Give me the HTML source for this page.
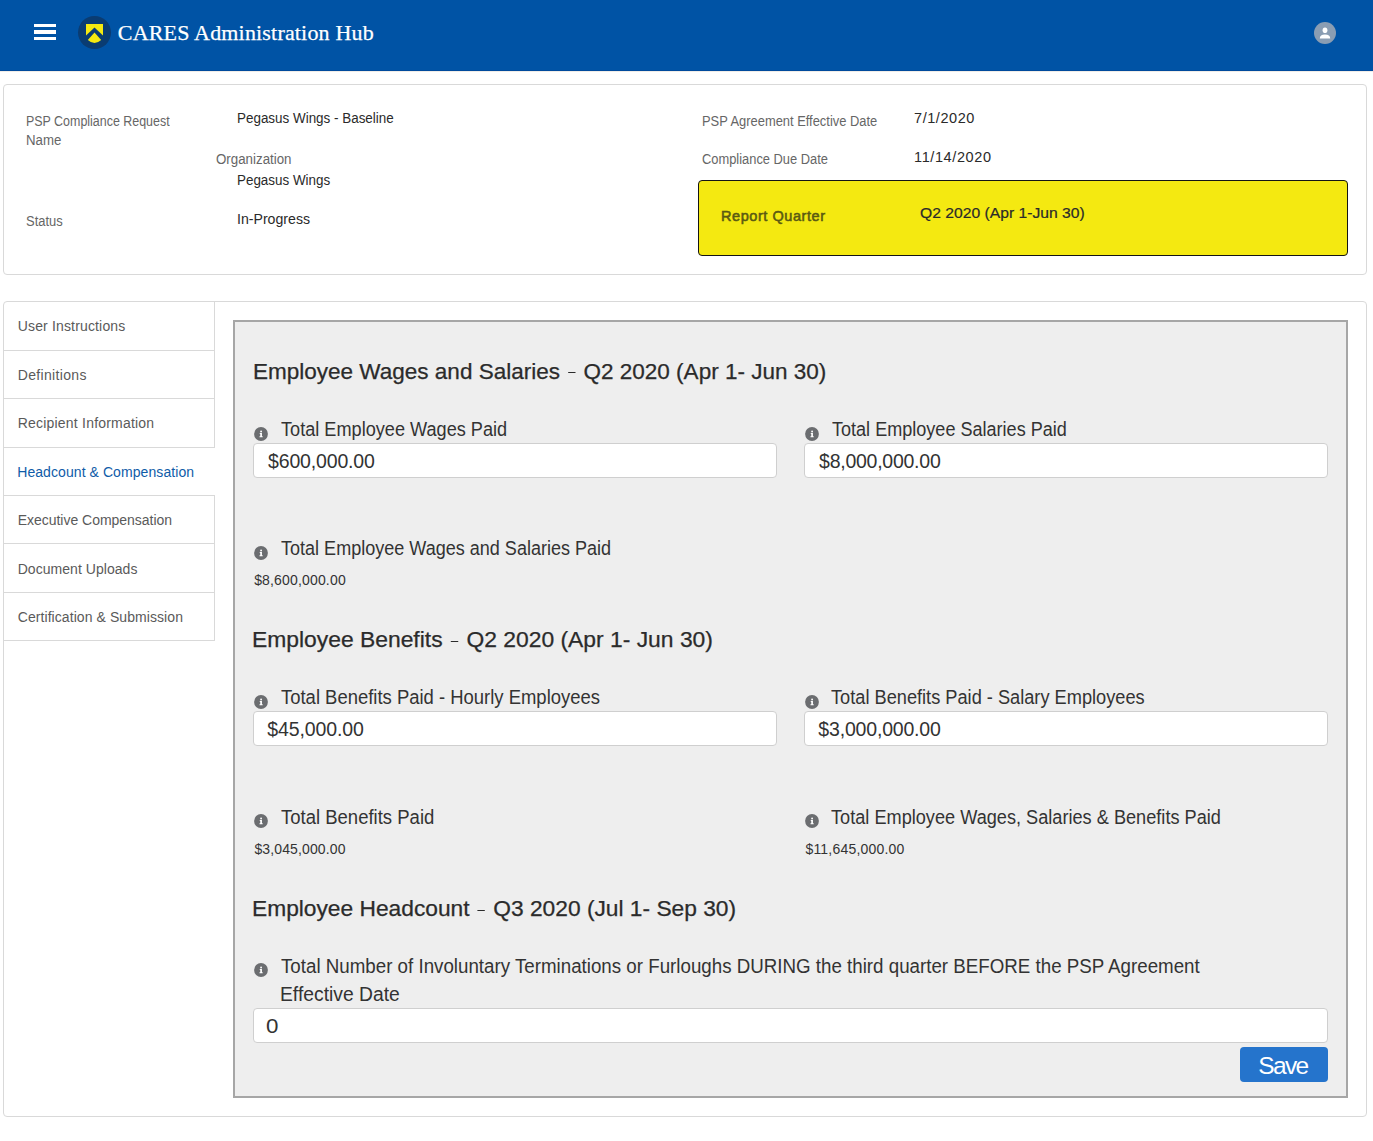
<!DOCTYPE html>
<html><head><meta charset="utf-8">
<style>
*{box-sizing:border-box;margin:0;padding:0}
html,body{width:1373px;height:1141px;overflow:hidden;background:#fff;font-family:"Liberation Sans",sans-serif;color:#333}
.a{position:absolute;white-space:nowrap;line-height:1}
#hdr{position:absolute;left:0;top:0;width:1373px;height:71px;background:#0053a5;border-bottom:1px solid #004a9c;box-shadow:0 1px 0 #f1ede8}
.bar{position:absolute;left:34px;width:22px;background:#fff}
.ttl{font-family:"Liberation Serif",serif;color:#fff;-webkit-text-stroke:0.25px #fff}
.card{position:absolute;border:1px solid #d9d9d9;border-radius:4px;background:#fff}
.lbl{color:#666}
.val{color:#2a2a2a}
#yel{position:absolute;left:698px;top:180px;width:650px;height:76px;background:#f4e911;border:1px solid #141414;border-radius:4px}
.tab{position:absolute;left:3px;width:212px;border-bottom:1px solid #d9d9d9;border-right:1px solid #d9d9d9}
.tt{color:#5a5a5a}
#panel{position:absolute;left:233px;top:320px;width:1115px;height:778px;background:#eeeeee;border:2px solid #a6a6a6}
.h2{color:#2b2b2b;-webkit-text-stroke:0.25px #2b2b2b}
.dash{display:inline-block;width:7.3px;height:1.3px;background:#2b2b2b;vertical-align:0.25em;margin:0 1.6px}
.fl{color:#333}
.ic{position:absolute;width:14px;height:14px}
.inp{position:absolute;height:35px;background:#fff;border:1px solid #cfcfcf;border-radius:4px}
.iv{color:#333}
.sm{color:#333}
#save{position:absolute;left:1240px;top:1047px;width:88px;height:35px;background:#2574cc;border-radius:4px}
.sv{color:#fff}
.bp{display:inline-block;width:0;height:0;vertical-align:baseline}

</style></head><body>
<div id="hdr">
  <div class="bar" style="top:24px;height:3px"></div>
  <div class="bar" style="top:30px;height:4px"></div>
  <div class="bar" style="top:37px;height:3px"></div>
  <svg style="position:absolute;left:77px;top:15px" width="35" height="35" viewBox="0 0 35 35">
    <circle cx="17.5" cy="17.5" r="16.5" fill="#0a3c72"/>
    <path d="M9 9H26V20.5L17.5 12.5L9 20.5Z" fill="#f5e911"/>
    <path d="M10.8 25L17.5 17.5L24.2 25Q17.5 31 10.8 25Z" fill="#f5e911"/>
  </svg>
  <svg style="position:absolute;left:1314px;top:22px" width="22" height="22" viewBox="0 0 22 22">
    <circle cx="11" cy="11" r="11" fill="#8a9db3"/>
    <ellipse cx="11" cy="8.2" rx="2.4" ry="2.8" fill="#fff"/>
    <path d="M5.8 16.5Q5.8 12.5 11 12.5Q16.2 12.5 16.2 16.5Z" fill="#fff"/>
  </svg>
</div>
<div class="card" style="left:3px;top:84px;width:1364px;height:191px"></div>
<div id="yel"></div>
<div class="card" style="left:3px;top:301px;width:1364px;height:816px"></div>
<div class="tab" style="top:301px;height:50px"></div>
<div class="tab" style="top:350px;height:49px"></div>
<div class="tab" style="top:398px;height:50px"></div>
<div class="tab" style="top:447px;height:49px;border-right:none"></div>
<div class="tab" style="top:495px;height:49px"></div>
<div class="tab" style="top:543px;height:50px"></div>
<div class="tab" style="top:592px;height:49px"></div>
<div id="panel"></div>
<svg width="0" height="0" style="position:absolute"><defs>
<g id="info"><circle cx="7" cy="7" r="6.9" fill="#6b6d70"/><circle cx="7.1" cy="4.45" r="0.95" fill="#fff"/><path d="M5.75 6H7.95V9.25H8.7V10.2H5.5V9.25H6.25V7H5.75Z" fill="#fff"/></g>
</defs></svg>
<svg class="ic" style="left:254.4px;top:427px" viewBox="0 0 14 14"><use href="#info"/></svg>
<svg class="ic" style="left:805.4px;top:427px" viewBox="0 0 14 14"><use href="#info"/></svg>
<svg class="ic" style="left:254.4px;top:546px" viewBox="0 0 14 14"><use href="#info"/></svg>
<svg class="ic" style="left:254.4px;top:695px" viewBox="0 0 14 14"><use href="#info"/></svg>
<svg class="ic" style="left:805.4px;top:695px" viewBox="0 0 14 14"><use href="#info"/></svg>
<svg class="ic" style="left:254.4px;top:814px" viewBox="0 0 14 14"><use href="#info"/></svg>
<svg class="ic" style="left:805.4px;top:814px" viewBox="0 0 14 14"><use href="#info"/></svg>
<svg class="ic" style="left:254.4px;top:963px" viewBox="0 0 14 14"><use href="#info"/></svg>
<div class="inp" style="left:253px;top:443px;width:524px"></div>
<div class="inp" style="left:804px;top:443px;width:524px"></div>
<div class="inp" style="left:253px;top:711px;width:524px"></div>
<div class="inp" style="left:804px;top:711px;width:524px"></div>
<div class="inp" style="left:253px;top:1008px;width:1075px"></div>
<div id="save"></div>

<div id="title" class="a ttl" style="left:117.84px;top:21.91px;font-size:22px;letter-spacing:0.176px;">CARES Administration Hub<i class="bp"></i></div>
<div id="l1" class="a lbl" style="left:26.18px;top:113.91px;font-size:14px;letter-spacing:0.000px;transform:scaleX(0.8885);transform-origin:0 0;">PSP Compliance Request<i class="bp"></i></div>
<div id="l1b" class="a lbl" style="left:26.10px;top:132.81px;font-size:14px;letter-spacing:0.000px;transform:scaleX(0.9446);transform-origin:0 0;">Name<i class="bp"></i></div>
<div id="v1" class="a val" style="left:237.40px;top:110.81px;font-size:14px;letter-spacing:0.000px;transform:scaleX(0.9591);transform-origin:0 0;">Pegasus Wings - Baseline<i class="bp"></i></div>
<div id="l2" class="a lbl" style="left:216.00px;top:152.31px;font-size:14px;letter-spacing:0.000px;transform:scaleX(0.9515);transform-origin:0 0;">Organization<i class="bp"></i></div>
<div id="v2" class="a val" style="left:237.40px;top:172.51px;font-size:14px;letter-spacing:0.000px;transform:scaleX(0.9577);transform-origin:0 0;">Pegasus Wings<i class="bp"></i></div>
<div id="l3" class="a lbl" style="left:26.10px;top:213.61px;font-size:14px;letter-spacing:0.000px;transform:scaleX(0.9246);transform-origin:0 0;">Status<i class="bp"></i></div>
<div id="v3" class="a val" style="left:237.40px;top:211.91px;font-size:14px;letter-spacing:0.000px;transform:scaleX(1.0091);transform-origin:0 0;">In-Progress<i class="bp"></i></div>
<div id="l4" class="a lbl" style="left:702.36px;top:113.91px;font-size:14px;letter-spacing:0.000px;transform:scaleX(0.9215);transform-origin:0 0;">PSP Agreement Effective Date<i class="bp"></i></div>
<div id="v4" class="a val" style="left:914.06px;top:110.91px;font-size:14.5px;letter-spacing:0.551px;">7/1/2020<i class="bp"></i></div>
<div id="l5" class="a lbl" style="left:702.36px;top:151.71px;font-size:14px;letter-spacing:0.000px;transform:scaleX(0.9197);transform-origin:0 0;">Compliance Due Date<i class="bp"></i></div>
<div id="v5" class="a val" style="left:914.06px;top:149.50px;font-size:14.5px;letter-spacing:0.600px;">11/14/2020<i class="bp"></i></div>
<div id="rq" class="a " style="left:721.06px;top:209.40px;font-size:14.5px;letter-spacing:0.554px;color:#5b5a12;-webkit-text-stroke:0.55px #5b5a12;">Report Quarter<i class="bp"></i></div>
<div id="q2" class="a " style="left:920.10px;top:206.31px;font-size:14.5px;letter-spacing:0.000px;transform:scaleX(1.0810);transform-origin:0 0;color:#2a2a2a;-webkit-text-stroke:0.2px #2a2a2a;">Q2 2020 (Apr 1-Jun 30)<i class="bp"></i></div>
<div id="t1" class="a tt" style="left:17.72px;top:319.10px;font-size:14px;letter-spacing:0.157px;">User Instructions<i class="bp"></i></div>
<div id="t2" class="a tt" style="left:17.72px;top:367.90px;font-size:14px;letter-spacing:0.333px;">Definitions<i class="bp"></i></div>
<div id="t3" class="a tt" style="left:17.72px;top:415.60px;font-size:14px;letter-spacing:0.207px;">Recipient Information<i class="bp"></i></div>
<div id="t4" class="a tt" style="left:17.22px;top:464.70px;font-size:14px;letter-spacing:0.074px;color:#0f5ca8;">Headcount &amp; Compensation<i class="bp"></i></div>
<div id="t5" class="a tt" style="left:17.72px;top:513.00px;font-size:14px;letter-spacing:-0.026px;">Executive Compensation<i class="bp"></i></div>
<div id="t6" class="a tt" style="left:17.72px;top:561.81px;font-size:14px;letter-spacing:0.042px;">Document Uploads<i class="bp"></i></div>
<div id="t7" class="a tt" style="left:17.72px;top:609.82px;font-size:14px;letter-spacing:0.072px;">Certification &amp; Submission<i class="bp"></i></div>
<div id="h1" class="a h2" style="left:253.18px;top:361.81px;font-size:21.5px;letter-spacing:0.000px;transform:scaleX(1.0471);transform-origin:0 0;">Employee Wages and Salaries <span class="dash"></span> Q2 2020 (Apr 1- Jun 30)<i class="bp"></i></div>
<div id="f1" class="a fl" style="left:281.30px;top:419.60px;font-size:19.5px;letter-spacing:0.000px;transform:scaleX(0.9300);transform-origin:0 0;">Total Employee Wages Paid<i class="bp"></i></div>
<div id="i1" class="a iv" style="left:268.04px;top:451.71px;font-size:19.5px;letter-spacing:-0.162px;">$600,000.00<i class="bp"></i></div>
<div id="f2" class="a fl" style="left:832.22px;top:419.60px;font-size:19.5px;letter-spacing:0.000px;transform:scaleX(0.9258);transform-origin:0 0;">Total Employee Salaries Paid<i class="bp"></i></div>
<div id="i2" class="a iv" style="left:819.08px;top:451.71px;font-size:19.5px;letter-spacing:-0.255px;">$8,000,000.00<i class="bp"></i></div>
<div id="f3" class="a fl" style="left:281.08px;top:538.81px;font-size:19.5px;letter-spacing:0.000px;transform:scaleX(0.9248);transform-origin:0 0;">Total Employee Wages and Salaries Paid<i class="bp"></i></div>
<div id="s1" class="a sm" style="left:254.16px;top:572.91px;font-size:14px;letter-spacing:0.165px;">$8,600,000.00<i class="bp"></i></div>
<div id="h2" class="a h2" style="left:252.24px;top:630.32px;font-size:21.5px;letter-spacing:0.000px;transform:scaleX(1.0631);transform-origin:0 0;">Employee Benefits <span class="dash"></span> Q2 2020 (Apr 1- Jun 30)<i class="bp"></i></div>
<div id="f4" class="a fl" style="left:281.26px;top:687.81px;font-size:19.5px;letter-spacing:0.000px;transform:scaleX(0.9463);transform-origin:0 0;">Total Benefits Paid - Hourly Employees<i class="bp"></i></div>
<div id="i3" class="a iv" style="left:267.34px;top:720.01px;font-size:19.5px;letter-spacing:-0.120px;">$45,000.00<i class="bp"></i></div>
<div id="f5" class="a fl" style="left:831.38px;top:687.81px;font-size:19.5px;letter-spacing:0.000px;transform:scaleX(0.9334);transform-origin:0 0;">Total Benefits Paid - Salary Employees<i class="bp"></i></div>
<div id="i4" class="a iv" style="left:818.34px;top:720.01px;font-size:19.5px;letter-spacing:-0.180px;">$3,000,000.00<i class="bp"></i></div>
<div id="f6" class="a fl" style="left:281.00px;top:807.60px;font-size:19.5px;letter-spacing:0.000px;transform:scaleX(0.9491);transform-origin:0 0;">Total Benefits Paid<i class="bp"></i></div>
<div id="s2" class="a sm" style="left:254.42px;top:841.50px;font-size:14px;letter-spacing:0.127px;">$3,045,000.00<i class="bp"></i></div>
<div id="f7" class="a fl" style="left:831.38px;top:807.81px;font-size:19.5px;letter-spacing:0.000px;transform:scaleX(0.9311);transform-origin:0 0;">Total Employee Wages, Salaries &amp; Benefits Paid<i class="bp"></i></div>
<div id="s3" class="a sm" style="left:805.42px;top:841.71px;font-size:14px;letter-spacing:0.208px;">$11,645,000.00<i class="bp"></i></div>
<div id="h3" class="a h2" style="left:252.24px;top:899.21px;font-size:21.5px;letter-spacing:0.000px;transform:scaleX(1.0582);transform-origin:0 0;">Employee Headcount <span class="dash"></span> Q3 2020 (Jul 1- Sep 30)<i class="bp"></i></div>
<div id="f8" class="a fl" style="left:281.00px;top:957.00px;font-size:19.5px;letter-spacing:0.000px;transform:scaleX(0.9607);transform-origin:0 0;">Total Number of Involuntary Terminations or Furloughs DURING the third quarter BEFORE the PSP Agreement<i class="bp"></i></div>
<div id="f8b" class="a fl" style="left:280.10px;top:985.01px;font-size:19.5px;letter-spacing:0.000px;transform:scaleX(0.9897);transform-origin:0 0;">Effective Date<i class="bp"></i></div>
<div id="i5" class="a iv" style="left:266.44px;top:1016.81px;font-size:19.5px;letter-spacing:0.000px;transform:scaleX(1.1451);transform-origin:0 0;">0<i class="bp"></i></div>
<div id="sv" class="a sv" style="left:1258.26px;top:1053.81px;font-size:24.5px;letter-spacing:-1.620px;">Save<i class="bp"></i></div>
</body></html>
